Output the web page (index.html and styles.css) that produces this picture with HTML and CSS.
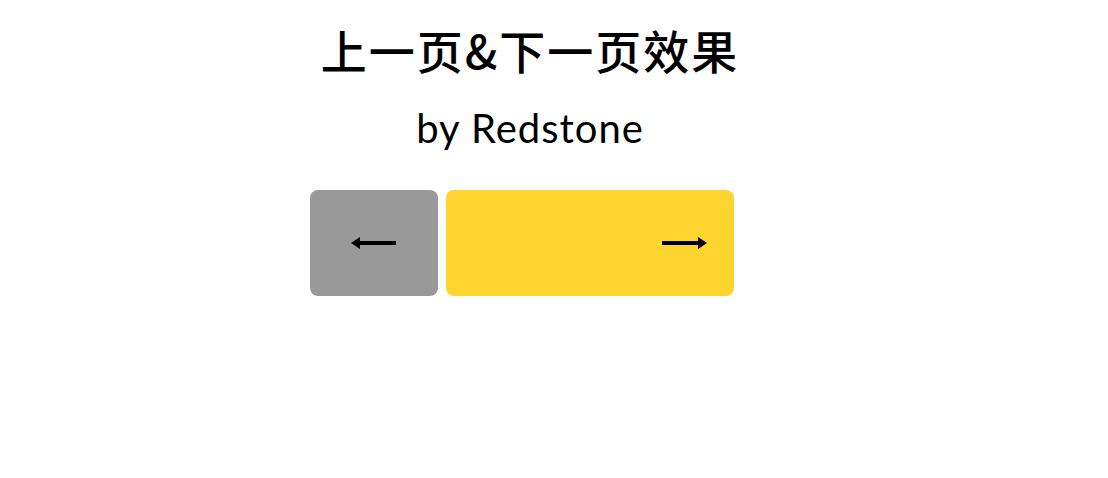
FILE: index.html
```html
<!DOCTYPE html>
<html lang="zh-CN">
<head>
    <meta charset="UTF-8">
    <meta name="viewport" content="width=device-width, initial-scale=1.0">
    <title>上一页&amp;下一页效果</title>
    <link rel="stylesheet" href="styles.css">
</head>
<body>
    <div class="wrap">
        <h1>上一页&amp;下一页效果</h1>
        <h2>by Redstone</h2>

        <!-- 翻页按钮 -->
        <div class="pager">
            <a class="btn prev" href="#">
                <svg width="46" height="12" viewBox="0 0 46 12">
                    <path d="M6 6H45" stroke="#000" stroke-width="4"/>
                    <path d="M0 6L9 0V12Z" fill="#000"/>
                </svg>
            </a>
            <a class="btn next" href="#">
                <svg width="46" height="12" viewBox="0 0 46 12">
                    <path d="M1 6H40" stroke="#000" stroke-width="4"/>
                    <path d="M46 6L37 0V12Z" fill="#000"/>
                </svg>
            </a>
        </div>
    </div>
</body>
</html>
```

FILE: styles.css
```css
body {
    margin: 0;
    padding: 0;
    background-color: #fff;
    font-family: "Lato", "Noto Sans CJK SC", sans-serif;
    color: #000;
}
.wrap {
    width: 1060px;
    text-align: center;
}
h1 {
    font-family: "Noto Sans CJK SC", sans-serif;
    font-size: 46px;
    font-weight: 500;
    letter-spacing: 2px;
    margin: 0;
    padding-top: 20px;
    line-height: 58px;
}
h2 {
    font-size: 40px;
    font-weight: 400;
    letter-spacing: 1px;
    margin: 0;
    padding-top: 26px;
    line-height: 48px;
}
.pager {
    display: flex;
    justify-content: center;
    gap: 8px;
    margin-top: 38px;
    padding-right: 16px;
}
.btn {
    display: flex;
    align-items: center;
    height: 106px;
    border-radius: 8px;
}
.prev {
    width: 128px;
    background-color: #999;
    justify-content: center;
}
.next {
    width: 288px;
    background-color: #fdd52e;
    justify-content: flex-end;
    padding-right: 27px;
    box-sizing: border-box;
}
```
